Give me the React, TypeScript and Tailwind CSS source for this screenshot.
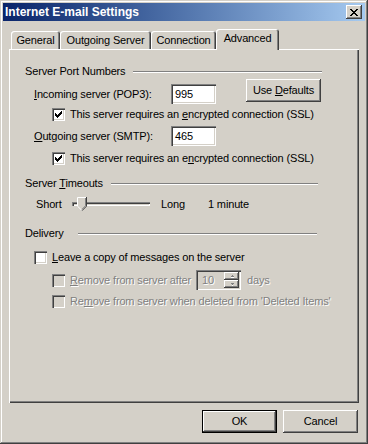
import type { ReactNode } from "react";

const raised =
  "shadow-[inset_-1px_-1px_#404040,inset_1px_1px_#fff,inset_-2px_-2px_#808080,inset_2px_2px_#d4d0c8]";
const sunken =
  "shadow-[inset_1px_1px_#808080,inset_2px_2px_#404040,inset_-1px_-1px_#fff,inset_-2px_-2px_#d4d0c8]";
const tabEdge = "shadow-[inset_1px_1px_#fff,inset_-1px_0_#404040,inset_-2px_0_#808080]";
const dim = "text-[#808080] [text-shadow:1px_1px_0_#fff]";

const X_ROWS = ["11000011", "01100110", "00111100", "00011000", "00111100", "01100110", "11000011"];

function CloseGlyph() {
  return (
    <svg width="8" height="7" viewBox="0 0 8 7" shapeRendering="crispEdges">
      {X_ROWS.flatMap((row, y) =>
        row.split("").map((c, x) => (c === "1" ? <rect key={`${x}-${y}`} x={x} y={y} width="1" height="1" fill="#000" /> : null)),
      )}
    </svg>
  );
}

function Checkbox({ checked = false, disabled = false }: { checked?: boolean; disabled?: boolean }) {
  return (
    <span
      className={`flex h-[13px] w-[13px] shrink-0 items-center justify-center ${sunken} ${
        disabled ? "bg-[#d4d0c8]" : "bg-white"
      }`}
    >
      {checked && (
        <svg width="7" height="7" viewBox="0 0 7 7" shapeRendering="crispEdges">
          <path d="M0 2h1v1h1v1h1v-1h1v-1h1v-1h1v-1h1v3h-1v1h-1v1h-1v1h-1v1h-1v-1h-1v-1h-1z" fill="#000" />
        </svg>
      )}
    </span>
  );
}

function GroupHeader({ label, labelW, lineW }: { label: ReactNode; labelW: string; lineW: string }) {
  return (
    <div className="flex h-[13px] items-center pl-[16px]">
      <span className={`whitespace-nowrap ${labelW}`}>{label}</span>
      <span className={`h-[2px] border-t border-b border-t-[#808080] border-b-white ${lineW}`} />
    </div>
  );
}

function Field({ value }: { value: string }) {
  return (
    <div className={`flex h-[20px] w-[45px] items-center bg-white pl-[4px] ${sunken}`}>{value}</div>
  );
}

function SpinArrow({ up }: { up?: boolean }) {
  return (
    <svg width="6" height="4" viewBox="0 0 6 4" shapeRendering="crispEdges">
      <path d={up ? "M2.5 0.5h1v1h1v1h-3v-1h1z" : "M1.5 0.5h3v1h-1v1h-1v-1h-1z"} fill="#808080" />
      <path d={up ? "M2 2.5h3v1h-3z" : "M3 2.5h1v1h-1z"} fill="#fff" />
    </svg>
  );
}

function Thumb() {
  return (
    <svg width="10" height="14" viewBox="0 0 10 14" className="absolute left-[5px] top-0">
      <path d="M0 0h10v9l-5 5l-5-5z" fill="#d4d0c8" />
      <path d="M0.5 9.2V0.5H9" stroke="#fff" fill="none" />
      <path d="M0.5 9.2L5 13.5" stroke="#fff" fill="none" />
      <path d="M9.5 0V9.2L5 13.7" stroke="#404040" fill="none" />
      <path d="M8.5 1V8.8L5 12.3" stroke="#808080" fill="none" />
    </svg>
  );
}

function Button({ children, isDefault = false, className = "" }: { children: ReactNode; isDefault?: boolean; className?: string }) {
  return (
    <div
      className={`flex h-[23px] w-[75px] items-center justify-center bg-[#d4d0c8] ${raised} ${
        isDefault ? "border border-black" : ""
      } ${className}`}
    >
      {children}
    </div>
  );
}

export default function App() {
  return (
    <div
      className={`flex h-[444px] w-[368px] flex-col bg-[#d4d0c8] font-['Liberation_Sans',Arial,sans-serif] text-[11px] leading-[13px] tracking-[-0.15px] text-black shadow-[inset_-1px_-1px_#404040,inset_1px_1px_#d4d0c8,inset_-2px_-2px_#808080,inset_2px_2px_#fff]`}
    >
      {/* title bar */}
      <div className="mx-[3px] mt-[3px] flex h-[18px] items-center justify-between bg-gradient-to-r from-[#0a246a] to-[#a6caf0] pl-[2px] pr-[3px]">
        <span className="text-[12px] font-bold tracking-normal text-white">Internet E-mail Settings</span>
        <div className={`flex h-[14px] w-[16px] items-center justify-center bg-[#d4d0c8] ${raised}`}>
          <CloseGlyph />
        </div>
      </div>

      <div className="ml-[9px] mt-[8px] flex w-[350px] flex-col">
        {/* tabs */}
        <div className="relative z-10 flex h-[20px] items-end pl-[2px]">
          <div className={`flex h-[18px] w-[49px] items-center justify-center rounded-t-[3px] ${tabEdge}`}>General</div>
          <div className={`flex h-[18px] w-[91px] items-center justify-center rounded-t-[3px] ${tabEdge}`}>Outgoing Server</div>
          <div className={`flex h-[18px] w-[65px] items-center justify-center rounded-t-[3px] ${tabEdge}`}>Connection</div>
          <div className={`-mb-px flex h-[21px] w-[63px] items-start justify-center rounded-t-[3px] bg-[#d4d0c8] pt-[3px] ${tabEdge}`}>
            Advanced
          </div>
        </div>

        {/* panel */}
        <div className="flex h-[354px] flex-col pt-[16px] shadow-[inset_1px_1px_#fff,inset_-1px_-1px_#404040,inset_-2px_-2px_#808080]">
          <GroupHeader label="Server Port Numbers" labelW="w-[108px]" lineW="w-[189px]" />

          <div className="mt-[1px] flex h-[25px] items-start pl-[25px]">
            <div className="mt-[5px] flex h-[20px] items-center">
              <span className="w-[137px]">
                <span className="underline">I</span>ncoming server (POP3):
              </span>
              <Field value="995" />
            </div>
            <Button className="ml-[30px]">
              <span>
                Use <span className="underline">D</span>efaults
              </span>
            </Button>
          </div>

          <div className="mt-[4px] flex h-[13px] items-center gap-[5px] pl-[43px]">
            <Checkbox checked />
            <span className="whitespace-nowrap">
              This server requires an <span className="underline">e</span>ncrypted connection (SSL)
            </span>
          </div>

          <div className="mt-[5px] flex h-[20px] items-center pl-[25px]">
            <span className="w-[137px]">
              <span className="underline">O</span>utgoing server (SMTP):
            </span>
            <Field value="465" />
          </div>

          <div className="mt-[6px] flex h-[13px] items-center gap-[5px] pl-[43px]">
            <Checkbox checked />
            <span className="whitespace-nowrap">
              This server requires an e<span className="underline">n</span>crypted connection (SSL)
            </span>
          </div>

          <div className="mt-[12px]">
            <GroupHeader
              label={
                <>
                  Server <span className="underline">T</span>imeouts
                </>
              }
              labelW="w-[86px]"
              lineW="w-[207px]"
            />
          </div>

          <div className="mt-[7px] flex h-[14px] items-center pl-[27px]">
            <span className="w-[36px]">Short</span>
            <div className="relative flex h-[14px] w-[78px] items-center">
              <div className={`h-[4px] w-full ${sunken}`} />
              <Thumb />
            </div>
            <span className="ml-[11px] w-[47px]">Long</span>
            <span>1 minute</span>
          </div>

          <div className="mt-[16px]">
            <GroupHeader label="Delivery" labelW="w-[53px]" lineW="w-[239px]" />
          </div>

          <div className="mt-[11px] flex h-[13px] items-center gap-[5px] pl-[25px]">
            <Checkbox />
            <span className="whitespace-nowrap">
              <span className="underline">L</span>eave a copy of messages on the server
            </span>
          </div>

          <div className="mt-[6px] flex h-[20px] items-center pl-[43px]">
            <Checkbox disabled />
            <span className={`ml-[5px] w-[126px] whitespace-nowrap ${dim}`}>
              <span className="underline">R</span>emove from server after
            </span>
            <div className={`flex h-[20px] w-[45px] items-center justify-between bg-[#d4d0c8] p-[2px] ${sunken}`}>
              <span className={`pl-[4px] ${dim}`}>10</span>
              <div className="flex flex-col">
                <div className={`flex h-[8px] w-[15px] items-center justify-center ${raised}`}>
                  <SpinArrow up />
                </div>
                <div className={`flex h-[8px] w-[15px] items-center justify-center ${raised}`}>
                  <SpinArrow />
                </div>
              </div>
            </div>
            <span className={`ml-[6px] ${dim}`}>days</span>
          </div>

          <div className="mt-[5px] flex h-[13px] items-center gap-[5px] pl-[43px]">
            <Checkbox disabled />
            <span className={`whitespace-nowrap ${dim}`}>
              Re<span className="underline">m</span>ove from server when deleted from 'Deleted Items'
            </span>
          </div>
        </div>
      </div>

      {/* buttons */}
      <div className="mt-[7px] flex justify-end gap-[6px] pr-[10px]">
        <Button isDefault>OK</Button>
        <Button>Cancel</Button>
      </div>
    </div>
  );
}
